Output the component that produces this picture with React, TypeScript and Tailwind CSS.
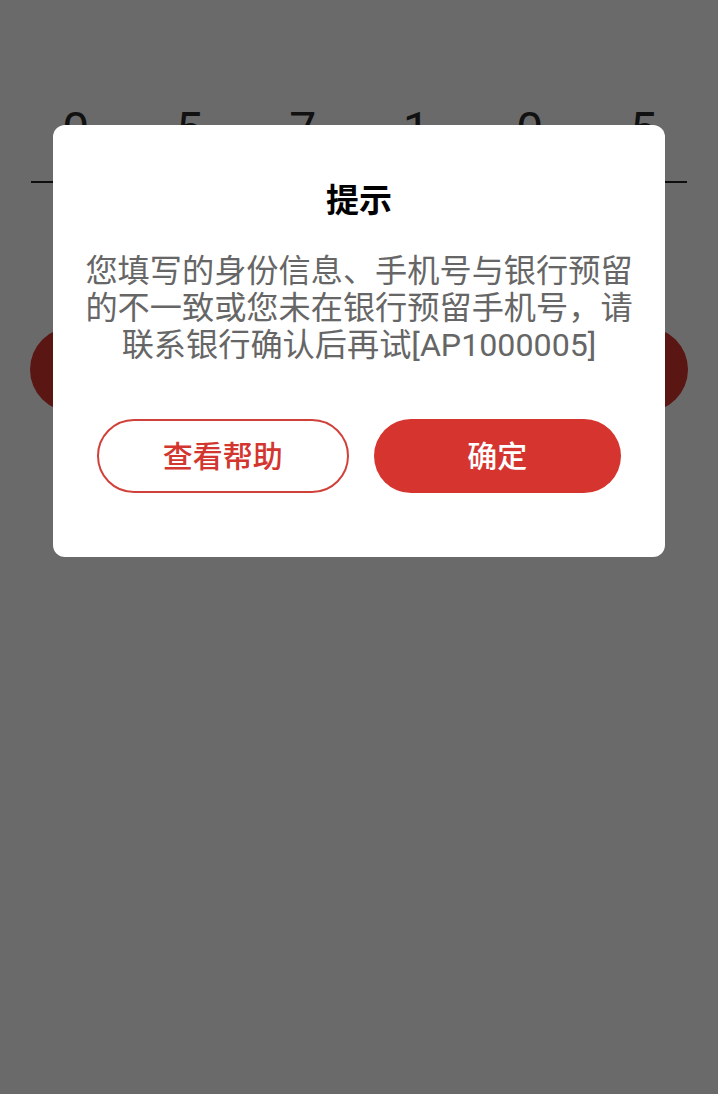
import React from "react";

const digits = ["0", "5", "7", "1", "0", "5"];

export default function App() {
  return (
    <div
      className="relative h-[1094px] w-full overflow-hidden bg-white"
      style={{ fontFamily: 'Roboto, "Noto Sans CJK SC", sans-serif' }}
    >
      {/* underlying page */}
      <div className="flex flex-col">
        <div className="flex pl-[19px] pt-[106px]">
          {digits.map((d, i) => (
            <div
              key={i}
              className="flex w-[113.5px] justify-center text-[48px] leading-none text-[#2a2a2a]"
            >
              {d}
            </div>
          ))}
        </div>
        <div className="mx-[31px] mt-[27px] h-[2px] bg-[#222]" />
        <div className="mx-[30px] mt-[144px] h-[85px] rounded-full bg-[#d8352f]" />
      </div>

      {/* overlay */}
      <div className="absolute inset-0 flex justify-center bg-[rgba(0,0,0,0.584)] pt-[125px]">
        <div className="flex h-[432px] w-[612px] flex-col items-center rounded-[12px] bg-white pt-[53px]">
          <div className="text-[33px] font-bold leading-[46px] text-black">提示</div>
          <div className="mt-[29px] px-[31px] text-center text-[32.2px] leading-[37px] text-[#666]">
            您填写的身份信息、手机号与银行预留的不一致或您未在银行预留手机号，请联系银行确认后再试[AP1000005]
          </div>
          <div className="mt-[55px] flex w-full gap-[25px] px-[44px]">
            <div className="flex h-[74px] flex-1 items-center justify-center rounded-full border-2 border-[#d0413b] text-[30px] font-medium text-[#d2362f]">
              查看帮助
            </div>
            <div className="flex h-[74px] flex-1 items-center justify-center rounded-full bg-[#d6352f] text-[30px] font-medium text-white">
              确定
            </div>
          </div>
        </div>
      </div>
    </div>
  );
}
